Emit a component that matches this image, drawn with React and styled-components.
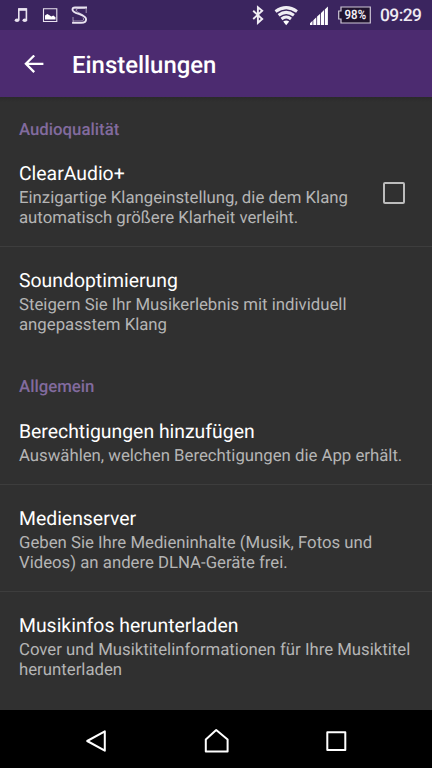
import React from 'react';
import styled, { createGlobalStyle } from 'styled-components';

const GlobalStyle = createGlobalStyle`
  * { box-sizing: border-box; }
  body { margin: 0; background: #303030; }
`;

const Screen = styled.div`
  display: flex;
  flex-direction: column;
  width: 432px;
  height: 768px;
  overflow: hidden;
  background: #303030;
  color: #fff;
  font-family: Roboto, "Noto Sans", sans-serif;
  text-rendering: geometricPrecision;
`;

const StatusBar = styled.header`
  display: flex;
  justify-content: space-between;
  flex: none;
  height: 30px;
  background: #3b255f;
`;

const StatusTime = styled.time`
  font-size: 17.4px;
  line-height: 32px;
  font-weight: 500;
  letter-spacing: -0.55px;
  width: 44px;
  margin-right: 8px;
  white-space: nowrap;
  color: #eeeaf3;
`;

const StatusIcons = styled.svg`
  display: block;
  flex: none;
`;

const StatusEnd = styled.div`
  display: flex;
`;

const BatteryText = styled.text`
  font: 600 13px Roboto, sans-serif;
  fill: #f3f0f6;
`;

const AppBar = styled.div`
  display: flex;
  align-items: center;
  flex: none;
  height: 67px;
  padding: 3px 0 0 24px;
  gap: 28px;
  background: #4c2b70;
`;

const BackButton = styled.button`
  display: flex;
  width: 20px;
  height: 20px;
  padding: 0;
  border: 0;
  background: none;
`;

const Title = styled.h1`
  margin: 0;
  font-size: 23.9px;
  line-height: 28px;
  font-weight: 500;
`;

const Content = styled.main`
  flex: 1;
  min-height: 0;
  overflow: hidden;
  background: linear-gradient(#2a2a2a, #303030 5px);
`;

const SectionTitle = styled.h2`
  height: 43px;
  margin: 0;
  padding: 23px 19px 0;
  font-size: 16.8px;
  line-height: 20px;
  font-weight: 500;
  color: #826b9e;
`;

const Row = styled.div`
  display: flex;
  align-items: center;
  height: ${({ $height }) => $height}px;
  padding: 0 19px;
  border-bottom: 1px solid ${({ $divider }) => ($divider ? '#3d3d3d' : 'transparent')};
`;

const RowText = styled.div`
  flex: 1;
  padding-top: 4px;
  white-space: pre;
`;

const RowTitle = styled.div`
  font-size: 19.4px;
  line-height: 24px;
  margin-bottom: 3px;
`;

const RowSummary = styled.div`
  margin-bottom: -1px;
  font-size: 16.75px;
  line-height: 19.7px;
  color: #b5b5b5;
`;

const Checkbox = styled.button`
  flex: none;
  width: 22px;
  height: 22px;
  margin-right: 8px;
  padding: 0;
  border: 2px solid #bcbcbc;
  border-radius: 2px;
  background: none;
`;

const NavBar = styled.nav`
  display: flex;
  justify-content: center;
  align-items: center;
  flex: none;
  gap: 90px;
  height: 58px;
  background: #000;
`;

const NavButton = styled.button`
  display: flex;
  width: 30px;
  height: 30px;
  padding: 0;
  border: 0;
  background: none;
`;

const NavIcon = ({ d }) => (
  <svg width="30" height="30" viewBox="0 0 30 30" fill="none" stroke="#fff" strokeWidth="2" strokeLinejoin="round">
    <path d={d} />
  </svg>
);

const sections = [
  {
    title: 'Audioqualität',
    rows: [
      {
        title: 'ClearAudio+',
        text: 'Einzigartige Klangeinstellung, die dem Klang\nautomatisch größere Klarheit verleiht.',
        height: 107,
        divider: true,
        checkbox: true,
      },
      {
        title: 'Soundoptimierung',
        text: 'Steigern Sie Ihr Musikerlebnis mit individuell\nangepasstem Klang',
        height: 107,
      },
    ],
  },
  {
    title: 'Allgemein',
    rows: [
      {
        title: 'Berechtigungen hinzufügen',
        text: 'Auswählen, welchen Berechtigungen die App erhält.',
        height: 88,
        divider: true,
      },
      {
        title: 'Medienserver',
        text: 'Geben Sie Ihre Medieninhalte (Musik, Fotos und\nVideos) an andere DLNA-Geräte frei.',
        height: 107,
        divider: true,
      },
      {
        title: 'Musikinfos herunterladen',
        text: 'Cover und Musiktitelinformationen für Ihre Musiktitel\nherunterladen',
        height: 107,
      },
    ],
  },
];

export default function App() {
  return (
    <>
      <GlobalStyle />
      <Screen>
        <StatusBar>
          <StatusIcons width="100" height="30" viewBox="0 0 100 30" fill="none" stroke="#e9e3f0">
            <path d="M18.8 20V9h7.6v11" strokeWidth="1.6" />
            <path d="M18.5 9.5h8.2" strokeWidth="2.6" />
            <ellipse cx="17" cy="20.3" rx="2.3" ry="1.8" fill="#e9e3f0" stroke="none" />
            <ellipse cx="24.8" cy="20.3" rx="2.3" ry="1.8" fill="#e9e3f0" stroke="none" />
            <path d="M43.5 8.7h13.3v12.8H43.5z" strokeWidth="1.1" />
            <path d="M45 19.5v-4l2.3-1.5 2.2 1.2 1.8 1.3 2-1 2.2 1.8v2.2z" fill="#fff" stroke="none" />
            <path d="M87 7.5H75q-2.5 0-2.5 2.2c0 4.3 13.6 4.3 13.6 9.6 0 2.5-2.3 3.6-5 3.6h-9" strokeWidth="1.9" />
            <path d="M86.2 7.5v5.5M73 17v6M74 8h11q-9 0-9 2c0 2.5 7.5 3.7 9 7M73 21h8q4-.3 2-3.4" strokeWidth=".6" />
          </StatusIcons>
          <StatusEnd>
            <StatusIcons width="130" height="30" viewBox="250 0 130 30" fill="none" stroke="#f0edf4">
              <path d="M253.2 10.8l9 8.2-4.3 3.8V7.2l4.3 3.6-9 8.2" strokeWidth="1.9" />
              <g strokeWidth="3">
                <path d="M275.5 11.5Q286.2 3.8 297 11.5" />
                <path d="M278.6 15.3Q286.2 9.4 293.9 15.3" />
                <path d="M281.5 19Q286.2 15 291 19" />
              </g>
              <path d="M283.2 21.5q3-2 6 0l-3 3.7z" fill="#fff" stroke="none" />
              <path d="M310 25v-1.8l2.5-2.4V25zM313.3 25v-4.8l3-2.9V25zM317.1 25v-8.4l3.1-2.9V25zM321 25V12.9l3-2.8V25zM324.8 25V9.4l3.1-2.9V25z" fill="#fff" stroke="none" />
              <path d="M341 7h29.3v16H341v-4h-2.3v-8h2.3z" fill="#21142f" strokeWidth="1.2" stroke="#cfc7d8" />
              <BatteryText x="344.6" y="19.4" stroke="none" textLength="21.5" lengthAdjust="spacingAndGlyphs">98%</BatteryText>
            </StatusIcons>
            <StatusTime>09:29</StatusTime>
          </StatusEnd>
        </StatusBar>
        <AppBar>
          <BackButton aria-label="Zurück">
            <svg width="20" height="20" viewBox="0 0 20 20" fill="none" stroke="#fff" strokeWidth="2.3">
              <path d="M10.2 .5L1.9 8.8l8.3 8.3M2 8.8h17.4" />
            </svg>
          </BackButton>
          <Title>Einstellungen</Title>
        </AppBar>
        <Content>
          {sections.map((section) => (
            <section key={section.title}>
              <SectionTitle>{section.title}</SectionTitle>
              {section.rows.map((row) => (
                <Row key={row.title} $height={row.height} $divider={row.divider}>
                  <RowText>
                    <RowTitle>{row.title}</RowTitle>
                    <RowSummary>{row.text}</RowSummary>
                  </RowText>
                  {row.checkbox && <Checkbox role="checkbox" aria-checked="false" aria-label={row.title} />}
                </Row>
              ))}
            </section>
          ))}
        </Content>
        <NavBar>
          <NavButton aria-label="Zurück"><NavIcon d="M23.8 7.3v19.4L6.2 17z" /></NavButton>
          <NavButton aria-label="Startseite"><NavIcon d="M15.2 6L4.8 15.4v12h21.8v-12z" /></NavButton>
          <NavButton aria-label="Übersicht"><NavIcon d="M6.3 8.3h18v17.8h-18z" /></NavButton>
        </NavBar>
      </Screen>
    </>
  );
}
